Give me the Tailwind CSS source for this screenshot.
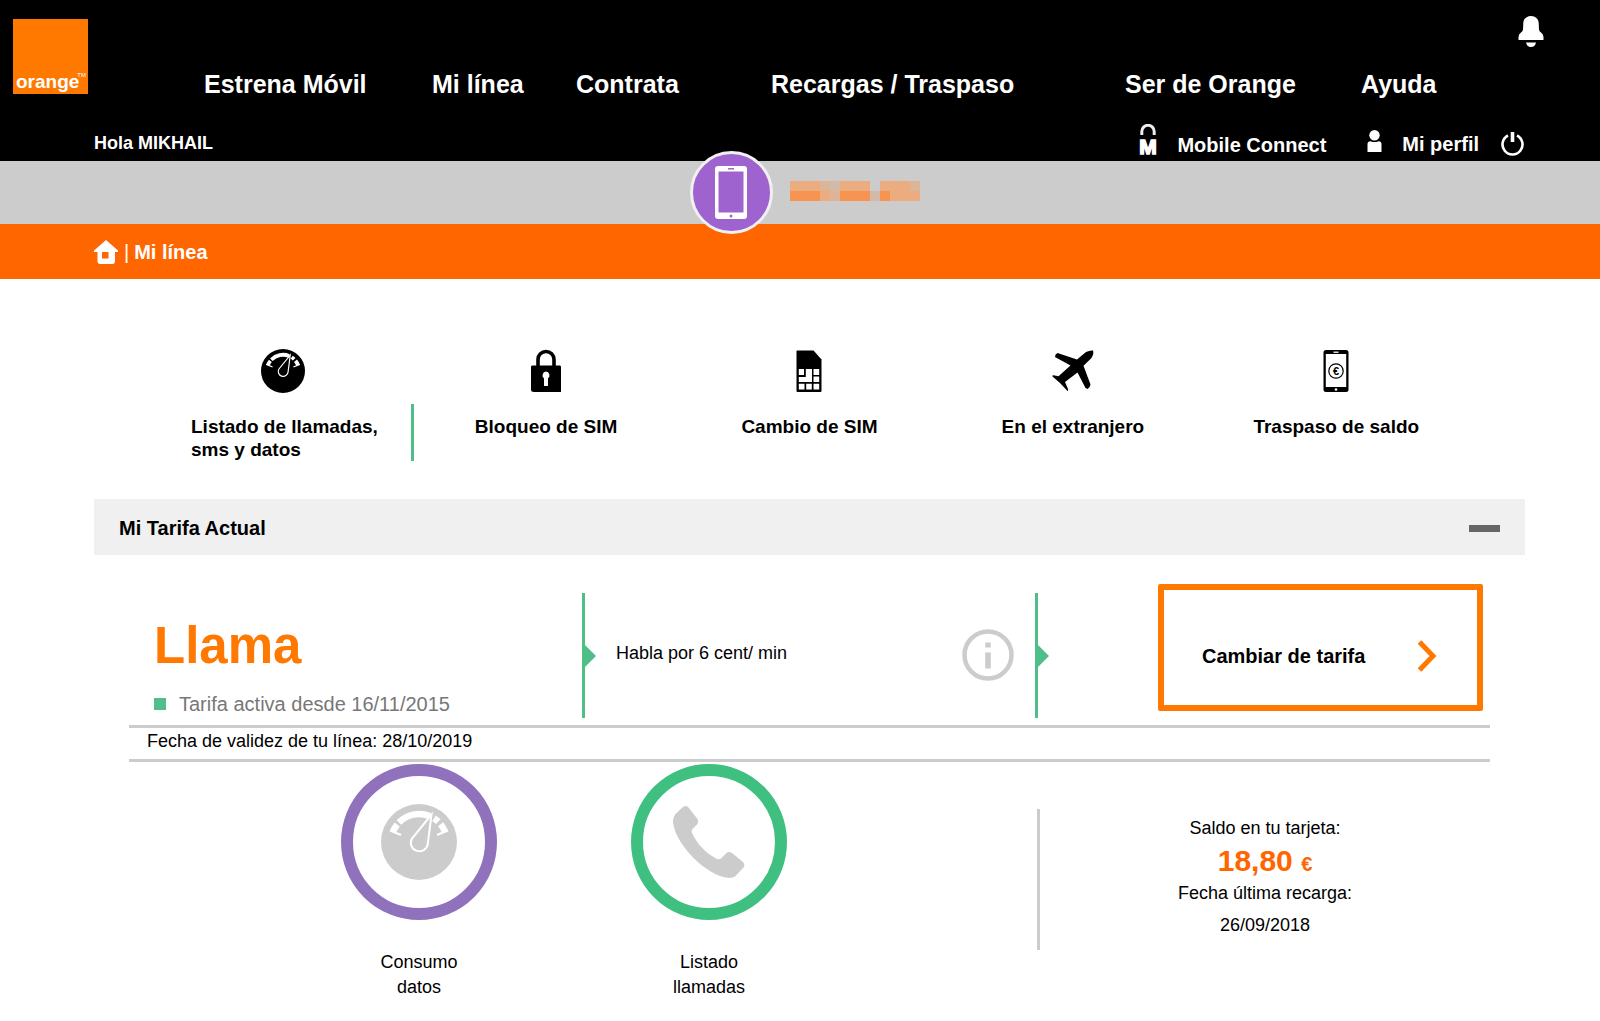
<!DOCTYPE html>
<html lang="es">
<head>
<meta charset="utf-8">
<meta name="viewport" content="width=device-width, initial-scale=1">
<title>Orange - Mi línea</title>
<script src="https://cdn.jsdelivr.net/npm/@tailwindcss/browser@4"></script>
</head>
<body class="min-h-screen bg-white font-['Liberation_Sans',Arial,sans-serif] text-lg text-black">

<svg class="hidden" aria-hidden="true">
  <symbol id="gauge" viewBox="0 0 76 76">
    <circle cx="38" cy="38" r="38" fill="currentColor"/>
    <g fill="none" stroke="#fff">
      <g stroke-width="6.5">
        <path d="M11.9 28A28 28 0 0 1 16.2 20.4"/>
        <path d="M17.9 18.5A28 28 0 0 1 48.5 12"/>
        <path d="M53 14.3A28 28 0 0 1 57.3 17.7"/>
        <path d="M59.6 20.2A28 28 0 0 1 64.1 28"/>
      </g>
      <path stroke-width="2" d="M9 26.5L20 31M67 26.5L56 31"/>
    </g>
    <path d="M50.5 10.5L31 34.5A8.5 8.5 0 1 0 46.8 39.5Z" fill="currentColor" stroke="#fff" stroke-width="2"/>
  </symbol>
</svg>

<header class="bg-black font-bold text-white">
  <div class="flex items-start pr-[56px] pl-[13px]">
    <a href="#" aria-label="Orange" class="relative mt-[19px] flex size-[75px] shrink-0 items-end bg-[#ff7900] pb-[1px] pl-[3px] text-[19px] leading-[22px]">orange<span class="absolute right-[2px] bottom-[15px] text-[6px] leading-[7px] font-normal">TM</span></a>
    <nav class="mt-[70px] ml-[116px] flex-1 text-[25px] leading-7 whitespace-nowrap">
      <ul class="grid grid-cols-[228fr_144fr_195fr_354fr_236fr_157fr]">
        <li><a href="#">Estrena Móvil</a></li>
        <li><a href="#">Mi línea</a></li>
        <li><a href="#">Contrata</a></li>
        <li><a href="#">Recargas / Traspaso</a></li>
        <li><a href="#">Ser de Orange</a></li>
        <li><a href="#">Ayuda</a></li>
      </ul>
    </nav>
    <button type="button" aria-label="Notificaciones" class="mt-[15px]">
      <svg class="block h-8 w-[26px]" viewBox="0 0 26 32" fill="currentColor"><path d="M13 1C17.500 1 20.500 4 20.700 8L21 14.500Q21.200 16.500 23 17.500Q25.500 19 25.500 22V25H.5V22Q.5 19 3 17.500Q4.800 16.500 5 14.500L5.300 8C5.500 4 8.500 1 13 1ZM8 27.500H18Q17 32 13 32T8 27.500Z"/></svg>
    </button>
  </div>
  <div class="mt-[26px] flex h-[37px] items-start justify-between pr-[76px] pl-[94px] leading-6">
    <p class="pt-[7px]">Hola MIKHAIL</p>
    <div class="flex items-start text-xl leading-6">
      <a href="#" class="flex items-start gap-[17px]">
        <svg class="h-9 w-6" viewBox="-2 0 24 36"><path d="M3.800 11V7.500a6.200 6.200 0 0 1 12.400 0V11" fill="none" stroke="#eee" stroke-width="3"/><text x="10" y="29.500" text-anchor="middle" font-size="21" font-weight="700" fill="#fff" stroke="#fff" stroke-width="1.500">M</text></svg>
        <span class="pt-[9px]">Mobile Connect</span>
      </a>
      <a href="#" class="ml-[41px] flex items-start gap-5">
        <svg class="mt-[6px] h-[23px] w-[15px]" viewBox="0 0 15 23" fill="#fff"><circle cx="7.500" cy="5.200" r="5.200"/><path d="M.5 22V14Q.5 11.500 3.500 11.200Q7.500 13 11.500 11.200Q14.500 11.500 14.500 14V22Z"/></svg>
        <span class="pt-2">Mi perfil</span>
      </a>
      <button type="button" aria-label="Cerrar sesión" class="mt-2 ml-[22px]">
        <svg class="block h-6 w-[23px]" viewBox="0 0 23 24" fill="none" stroke="#fff"><path d="M7 3.500A10 10 0 1 0 16 3.500" stroke-width="2.600"/><path d="M11.500 0V10" stroke-width="3.600"/></svg>
      </button>
    </div>
  </div>
</header>

<div class="flex h-[63px] items-center bg-[#ccc] pl-[43.100%]">
  <div class="z-10 flex size-[83px] shrink-0 items-center justify-center rounded-full border-[3px] border-[#f0f0f0] bg-[#9f63cf]">
    <svg class="h-[53px] w-8" viewBox="0 0 32 53"><rect width="32" height="53" rx="3" fill="#fff"/><rect x="3.500" y="5.500" width="25" height="41" fill="#9f63cf"/><path d="M13 2.800H19" stroke="#9f63cf" stroke-width="1.500"/><circle cx="16" cy="50" r="1.500" fill="#9f63cf"/></svg>
  </div>
  <svg class="ml-[17px] h-6 w-[130px]" viewBox="0 0 130 24" role="img" aria-label="Número de línea oculto" shape-rendering="crispEdges">
    <path fill="#ebac80" d="M0 0H30V10H0ZM50 0H80V10H50ZM90 0H120V10H90ZM30 10H40V20H30ZM100 10H130V20H100Z"/>
    <path fill="#dcb498" d="M30 0H40V10H30ZM120 0H130V10H120ZM40 10H50V20H40Z"/>
    <path fill="#d3b9a8" d="M40 0H50V10H40ZM80 10H90V20H80Z"/>
    <path fill="#f79452" d="M0 10H30V20H0ZM50 10H80V20H50ZM90 10H100V20H90Z"/>
  </svg>
</div>

<nav aria-label="Ruta" class="flex h-[55px] items-center bg-[#ff6600] pl-[94px] text-xl text-white">
  <a href="#" aria-label="Inicio"><svg class="block size-6" viewBox="0 0 24 24"><path d="M12 0L24 10.500V12H21V21Q21 24 18.500 24H6Q3.500 24 3.500 21V12H0V10.500Z" fill="#fff"/><rect x="8" y="12" width="6.500" height="6.500" fill="#ff6600"/></svg></a>
  <span class="ml-[6px]">|</span>
  <a href="#" class="ml-[5px] font-bold">Mi línea</a>
</nav>

<main class="pr-[75px] pl-[94px]">
  <ul class="mx-[57px] mb-[38px] grid grid-cols-5 pt-[70px] text-[19px] leading-[23px] font-bold">
    <li><a href="#" class="block">
      <svg class="mx-auto size-11 text-black"><use href="#gauge"/></svg>
      <span class="mt-[11px] flex h-[57px] border-r-[3px] border-[#50be87] pt-[11px] pl-10"><span>Listado de llamadas,<br>sms y datos</span></span>
    </a></li>
    <li><a href="#" class="block">
      <svg class="mx-auto h-11 w-[30px]" viewBox="0 0 30 44"><path d="M7 18V10.500a8 8 0 0 1 16 0V18" fill="none" stroke="#000" stroke-width="3.600"/><path d="M1 16.500H29Q30 16.500 30 18V43H3Q0 43 0 40.500V18Q0 16.500 1 16.500Z"/><path d="M15 22.500a3.800 3.800 0 0 1 2 6.800V37H13V29.300a3.800 3.800 0 0 1 2-6.800Z" fill="#fff"/></svg>
      <span class="mt-[11px] flex h-[57px] justify-center pt-[11px]">Bloqueo de SIM</span>
    </a></li>
    <li><a href="#" class="block">
      <svg class="mx-auto h-11 w-[26px]" viewBox="0 0 26 44"><path d="M1 1.500H17.500L25.500 10.500V42Q25.500 43 24.500 43H1.500Q.5 43 .5 42V2Z"/><g fill="#fff"><path d="M2.800 20H8V26H2.800ZM17.500 20H23.200V26H17.500ZM17.500 27.500H23.200V33H17.500ZM17.500 34.800H23.200V40.500H17.500ZM10.200 34.800H15.800V40.500H10.200ZM2.800 34.800H8.500V40.500H2.800ZM9.800 20H16V33H2.800V28H9.800Z"/></g></svg>
      <span class="mt-[11px] flex h-[57px] justify-center pt-[11px]">Cambio de SIM</span>
    </a></li>
    <li><a href="#" class="block">
      <svg class="mx-auto h-11 w-[42px]" viewBox="0 -1 42 44"><path d="M41 .5Q42.200 4 39.500 8L31.500 15.800L38.500 34.500Q38 38 35.500 39L33.500 38L25.500 22.500L13 32L16 39Q16.500 41 15.500 41L8 33L.5 26.500Q0 25 1.500 25.200L6.500 26.300L18.500 15.500L3 7Q3 4 5.500 3L25 9.500L34 2Q38 0 41 .5Z"/></svg>
      <span class="mt-[11px] flex h-[57px] justify-center pt-[11px]">En el extranjero</span>
    </a></li>
    <li><a href="#" class="block">
      <svg class="mx-auto h-11 w-[26px]" viewBox="0 0 26 44"><rect x=".5" y="1" width="25" height="42" rx="2.500"/><rect x="2.800" y="5" width="20.400" height="33" fill="#fff"/><path d="M10.500 3.200H15.500" stroke="#fff" stroke-width="1.300"/><circle cx="13" cy="40.500" r="1.300" fill="#fff"/><circle cx="13" cy="22" r="7.200" fill="none" stroke="#000" stroke-width="1.200"/><text x="13" y="26" text-anchor="middle" font-size="11" font-weight="700">€</text></svg>
      <span class="mt-[11px] flex h-[57px] justify-center pt-[11px]">Traspaso de saldo</span>
    </a></li>
  </ul>

  <div class="flex h-14 items-center justify-between bg-[#f0f0f0] px-[25px] pt-[2px]">
    <h2 class="text-xl font-bold">Mi Tarifa Actual</h2>
    <button type="button" aria-label="Contraer" class="py-3"><span class="block h-[7px] w-[31px] bg-[#666]"></span></button>
  </div>

  <section class="mx-[35px]">
    <div class="grid grid-cols-[453fr_3px_450fr_3px_452fr] items-start border-b-[3px] border-[#ccc] pt-[29px] pb-[7px]">
      <div class="mt-[9px] h-[125px] pt-[23px] pl-[25px]">
        <h3 class="text-[51px] leading-[60px] font-bold text-[#ff7900]">Llama</h3>
        <p class="mt-4 flex items-center gap-[13px] text-xl leading-6 text-[#777]"><span class="size-3 bg-[#50be87]"></span>Tarifa activa desde 16/11/2015</p>
      </div>
      <div class="relative mt-[9px] h-[125px] bg-[#50be87]">
        <svg class="absolute top-[52px] left-[3px] h-[22px] w-[11px]" viewBox="0 0 11 22"><path d="M0 0L11 11L0 22Z" fill="#50be87"/></svg>
      </div>
      <div class="mt-[9px] flex h-[125px] items-center justify-between pr-[21px] pb-[2px] pl-[31px]">
        <p class="pb-1">Habla por 6 cent/ min</p>
        <button type="button" aria-label="Información"><svg class="block size-[52px]" viewBox="0 0 52 52"><circle cx="26" cy="26" r="23.500" fill="none" stroke="#ccc" stroke-width="4.500"/><path d="M23.200 13.500H28.800V18.500H23.200ZM23.200 23.500H28.800V39.500H23.200Z" fill="#ccc"/></svg></button>
      </div>
      <div class="relative mt-[9px] h-[125px] bg-[#50be87]">
        <svg class="absolute top-[52px] left-[3px] h-[22px] w-[11px]" viewBox="0 0 11 22"><path d="M0 0L11 11L0 22Z" fill="#50be87"/></svg>
      </div>
      <button type="button" class="mr-[7px] flex h-[127px] w-[325px] items-center justify-between justify-self-end rounded-xs border-[6px] border-[#ff7900] pt-4 pr-10 pl-[38px] text-xl font-bold">Cambiar de tarifa
        <svg class="h-8 w-5" viewBox="0 0 20 32"><path d="M2.500 2L16 16L2.500 30" fill="none" stroke="#ff7900" stroke-width="5"/></svg>
      </button>
    </div>

    <p class="border-b-[3px] border-[#ccc] pt-px pb-[5px] pl-[18px] leading-[25px]">Fecha de validez de tu línea: <span>28/10/2019</span></p>

    <div class="grid grid-cols-[145fr_290fr_290fr_183fr_453fr] items-start text-center leading-[25px]">
      <a href="#" class="col-start-2 flex flex-col items-center pt-[2px]">
        <span class="flex size-[156px] items-center justify-center rounded-full border-[12px] border-[#8f72bb]"><svg class="size-[76px] text-[#ccc]"><use href="#gauge"/></svg></span>
        <span class="mt-[30px]">Consumo<br>datos</span>
      </a>
      <a href="#" class="flex flex-col items-center pt-[2px]">
        <span class="flex size-[156px] items-center justify-center rounded-full border-[12px] border-[#40c080]"><svg class="size-[72px]" viewBox="0 0 72 72"><path fill="#ccc" d="M2.500 8L10 1Q13 -1 15.500 1.500L24.500 13Q26 16 24 18.500L19.500 23Q17.800 25 19.500 28C25 39 33 47 43 52.500Q46 54 48 52.500L53 47.500Q56 45 59 47L70 56Q72.500 59 70.500 61.500L62.500 70Q60 72 56 72C33 70 2 38 0 16Q0 11 2.500 8Z"/></svg></span>
        <span class="mt-[30px]">Listado<br>llamadas</span>
      </a>
      <div class="col-start-5 mt-[47px] h-[141px] border-l-[3px] border-[#ccc] pt-[7px]">
        <p>Saldo en tu tarjeta:</p>
        <p class="text-[30px] leading-10 font-bold text-[#ff6600]">18,80 <span class="text-xl">€</span></p>
        <p>Fecha última recarga:</p>
        <p class="mt-[7px]">26/09/2018</p>
      </div>
    </div>
  </section>
</main>
</body>
</html>
